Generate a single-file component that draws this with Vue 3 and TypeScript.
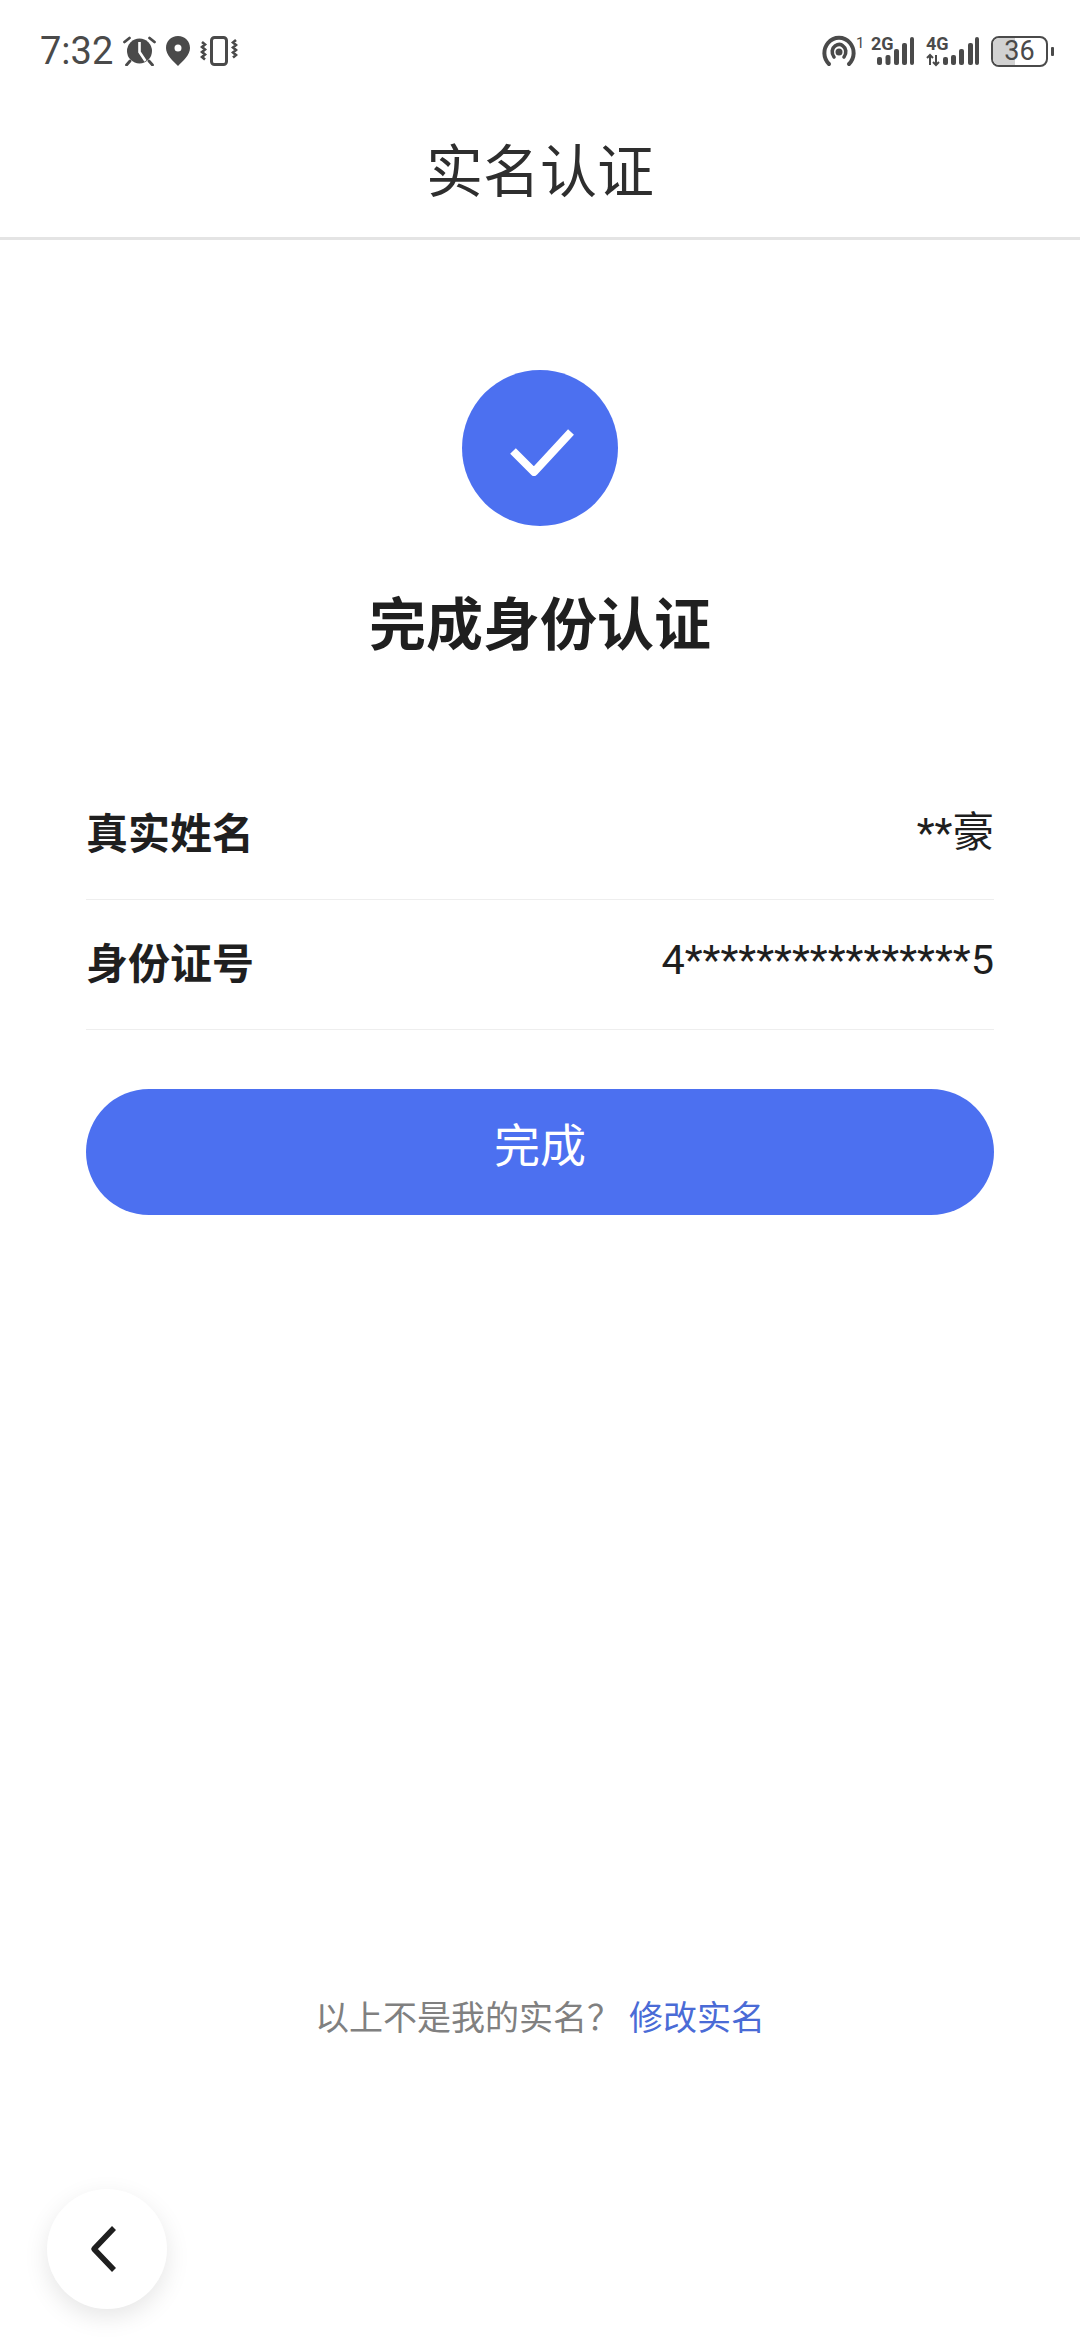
<script setup lang="ts">
const rows = [
  { label: '真实姓名', value: '**豪' },
  { label: '身份证号', value: '4****************5' },
]
</script>

<template>
  <div class="page">
    <div class="status">
      <div class="status-left">
        <span class="time">7:32</span>
        <svg class="ic-alarm" width="33" height="30" viewBox="0 0 33 30">
          <circle cx="16.500" cy="15" r="12.500" fill="#4a4a4a" />
          <path d="M16.500 6v10l6 9" fill="none" stroke="#fff" stroke-width="2.600" />
          <path d="M1.500 6l5-4M31.500 6l-5-4M7 25l-3.500 4M26 25l3.500 4" fill="none" stroke="#4a4a4a" stroke-width="2.800" stroke-linecap="round" />
        </svg>
        <svg class="ic-pin" width="24" height="30" viewBox="0 0 24 30">
          <path fill-rule="evenodd" d="M12 0C5 0 0 5 0 12c0 7 7 13 12 18 5-5 12-11 12-18C24 5 19 0 12 0zm0 8.500a3.500 3.500 0 1 1 0 7 3.500 3.500 0 0 1 0-7z" fill="#4a4a4a" />
        </svg>
        <svg class="ic-vib" width="38" height="30" viewBox="0 0 38 30">
          <rect x="11.500" y="1.500" width="15" height="27" rx="3" fill="none" stroke="#4a4a4a" stroke-width="3" />
          <path d="M2 6l3 2.500-3 2.500 3 2.500-3 2.500 3 2.500-3 2.500 3 2.500M36 4l-3 2.500 3 2.500-3 2.500 3 2.500-3 2.500 3 2.500-3 2.500" fill="none" stroke="#4a4a4a" stroke-width="2.600" />
        </svg>
      </div>
      <div class="status-right">
        <svg class="ic-hot" width="41" height="32" viewBox="0 0 41 32">
          <path d="M7 29C1 23 1 14 6 8c6-7 16-7 22 0 5 6 5 15-1 21" fill="none" stroke="#4a4a4a" stroke-width="4" stroke-linecap="round" />
          <path d="M12 22c-3-4-2-9 1-11 3-2 6-2 8 0 3 2 4 7 1 11" fill="none" stroke="#4a4a4a" stroke-width="3.600" stroke-linecap="round" />
          <circle cx="17" cy="17" r="3.500" fill="#4a4a4a" />
          <text x="34" y="13" class="tiny">1</text>
        </svg>
        <svg class="ic-net2" width="43" height="32" viewBox="0 0 43 32">
          <text x="0" y="15" class="net">2G</text>
          <g fill="#4a4a4a">
            <rect x="6" y="22" width="5" height="8" rx="2" />
            <rect x="14.500" y="20" width="5" height="10" rx="2" />
            <rect x="23" y="14" width="5" height="16" rx="2" />
            <rect x="31" y="8" width="5" height="22" rx="2" />
            <rect x="39" y="2" width="4" height="28" rx="2" />
          </g>
        </svg>
        <svg class="ic-net4" width="53" height="32" viewBox="0 0 53 32">
          <text x="0" y="15" class="net">4G</text>
          <path d="M4 30V20M1 23l3-3 3 3M10 20v10M7 27l3 3 3-3" fill="none" stroke="#4a4a4a" stroke-width="2" />
          <g fill="#4a4a4a">
            <rect x="17" y="22" width="5" height="8" rx="2" />
            <rect x="25" y="20" width="5" height="10" rx="2" />
            <rect x="33" y="14" width="5" height="16" rx="2" />
            <rect x="42" y="8" width="5" height="22" rx="2" />
            <rect x="49" y="2" width="4" height="28" rx="2" />
          </g>
        </svg>
        <div class="battery">
          <div class="batt-body">
            <div class="batt-fill"></div>
            <span class="batt-num">36</span>
          </div>
          <div class="batt-nub"></div>
        </div>
      </div>
    </div>

    <header class="header">实名认证</header>

    <main class="main">
      <div class="check">
        <svg width="66" height="48" viewBox="0 0 66 48">
          <path d="M3 23l21 21L61 4" fill="none" stroke="#fff" stroke-width="8" stroke-linejoin="round" />
        </svg>
      </div>
      <h1 class="title">完成身份认证</h1>

      <div class="rows">
        <div v-for="row in rows" :key="row.label" class="row">
          <span class="label">{{ row.label }}</span>
          <span class="value">{{ row.value }}</span>
        </div>
      </div>

      <button class="done" type="button"><span>完成</span></button>

      <p class="foot">
        <span class="foot-q">以上不是我的实名？</span><span class="foot-link">修改实名</span>
      </p>
    </main>

    <div class="back">
      <svg width="28" height="48" viewBox="0 0 28 48">
        <path d="M24 3L4 24l20 21" fill="none" stroke="#1f1f1f" stroke-width="5.500" stroke-linejoin="round" />
      </svg>
    </div>
  </div>
</template>

<style>
html, body { margin: 0; background: #fff; }
</style>

<style scoped>
.page {
  position: relative;
  width: 1080px;
  height: 2340px;
  overflow: hidden;
  background: #fff;
  font-family: "Noto Sans CJK SC", "Noto Sans", sans-serif;
  color: #1f1f1f;
}
.status {
  height: 100px;
  box-sizing: border-box;
  padding: 35px 26px 0 40px;
  display: flex;
  justify-content: space-between;
  align-items: flex-start;
}
.status-left { display: flex; align-items: center; height: 32px; }
.time {
  font-family: Roboto, sans-serif;
  font-size: 38px;
  line-height: 32px;
  color: #4a4a4a;
  width: 83px;
}
.ic-alarm { margin-right: 10px; }
.ic-pin { margin-right: 10px; }
.status-right { display: flex; align-items: center; height: 32px; }
.status-right svg { overflow: visible; }
.ic-hot { margin-right: 8px; }
.ic-net2 { margin-right: 12px; }
.ic-net4 { margin-right: 12px; }
.tiny, .net {
  font-family: Roboto, sans-serif;
  fill: #4a4a4a;
}
.tiny { font-size: 15px; }
.net { font-size: 18px; font-weight: 700; }
.battery { display: flex; align-items: center; gap: 3px; }
.batt-body {
  position: relative;
  box-sizing: border-box;
  width: 57px;
  height: 31px;
  border: 2.500px solid #4a4a4a;
  border-radius: 8px;
  overflow: hidden;
  display: flex;
  align-items: center;
  justify-content: center;
}
.batt-fill {
  position: absolute;
  left: 0;
  top: 0;
  bottom: 0;
  width: 42%;
  background: #d2d2d2;
}
.batt-num {
  position: relative;
  font-family: Roboto, sans-serif;
  font-size: 27px;
  line-height: 1;
  color: #4a4a4a;
}
.batt-nub { width: 3px; height: 9px; background: #4a4a4a; border-radius: 1px; }
.header {
  height: 135px;
  border-bottom: 3px solid #e4e4e4;
  display: flex;
  align-items: center;
  justify-content: center;
  font-size: 57px;
  line-height: 1;
  color: #2e2e2e;
  padding-bottom: 2px;
}
.main {
  display: flex;
  flex-direction: column;
  align-items: center;
  padding: 0 86px;
}
.check {
  margin-top: 130px;
  width: 156px;
  height: 156px;
  box-sizing: border-box;
  padding: 8px 0 0 6px;
  border-radius: 50%;
  background: #4c70f0;
  display: flex;
  align-items: center;
  justify-content: center;
}
.title {
  margin: 59px 0 0;
  font-size: 57px;
  line-height: 70px;
  font-weight: 700;
  color: #1f1f1f;
}
.rows { align-self: stretch; margin-top: 115px; }
.row {
  height: 130px;
  box-sizing: border-box;
  padding-bottom: 8px;
  border-bottom: 1px solid #eeeeee;
  display: flex;
  align-items: center;
  justify-content: space-between;
}
.label { font-size: 42px; font-weight: 700; color: #1f1f1f; }
.value {
  font-size: 41.500px;
  font-family: Roboto, "Noto Sans CJK SC", sans-serif;
  color: #1f1f1f;
  margin-bottom: 3px;
}
.done {
  align-self: stretch;
  margin-top: 59px;
  height: 126px;
  border: 0;
  border-radius: 63px;
  background: #4c70f0;
  color: #fff;
  font-family: inherit;
  font-size: 46px;
  padding: 0 0 20px;
}
.foot {
  margin: 776px 0 0;
  font-size: 34px;
  line-height: 50px;
  white-space: nowrap;
}
.foot-q { color: #808080; }
.foot-link { color: #4a6bd6; margin-left: 8px; }
.back {
  position: absolute;
  left: 47px;
  top: 2189px;
  width: 120px;
  height: 120px;
  border-radius: 50%;
  background: #fff;
  box-shadow: 0 8px 24px rgba(0, 0, 0, 0.1);
  display: flex;
  align-items: center;
  justify-content: center;
  box-sizing: border-box;
  padding-right: 6px;
}
</style>
